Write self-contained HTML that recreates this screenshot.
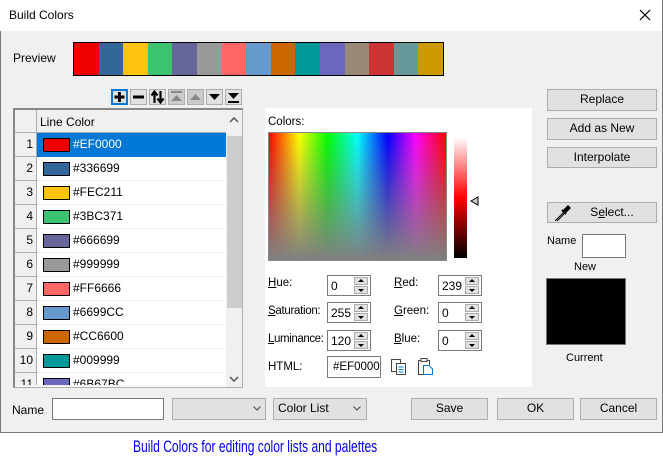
<!DOCTYPE html>
<html><head><meta charset="utf-8"><style>
*{box-sizing:border-box;margin:0;padding:0}
body{width:663px;height:468px;background:#fff;font-family:"Liberation Sans",sans-serif;font-size:12px;color:#000;position:relative;overflow:hidden}
.a{position:absolute}
.dlg{left:0;top:0;width:663px;height:433px;background:#f0f0f0;border:1px solid #7a7a7a;border-top:none}
.title{left:0;top:0;width:662px;height:31px;background:#fff}
.btn{position:absolute;background:#e1e1e1;border:1px solid #adadad;text-align:center;line-height:19px;font-size:12px}
.inp{position:absolute;background:#fff;border:1px solid #7a7a7a}
.tb{position:absolute;top:89px;width:17px;height:16px;background:#e1e1e1;border:1px solid #adadad}
.row{position:absolute;left:14px;width:211px;height:24px;border-bottom:1px solid #f0f0f0}
.num{position:absolute;left:0;top:0;width:22px;height:24px;background:#f0f0f0;border-right:1px solid #adadad;border-bottom:1px solid #adadad;text-align:right;padding-right:3px;line-height:23px}
.sw{position:absolute;left:28px;top:5px;width:27px;height:14px;border:1px solid #000}
.hx{position:absolute;left:58px;top:0;line-height:23px}
.spin{position:absolute;width:44px;height:21px;background:#fff;border:1px solid #7a7a7a}
.spin span{position:absolute;left:3px;top:3px}
.sb{position:absolute;right:1px;top:1px;width:15px;height:17px}
.sb i{position:absolute;left:0;width:14px;height:8px;background:#e1e1e1;border:1px solid #adadad}
.sb i.u:after{content:"";position:absolute;left:3px;top:1px;border:3px solid transparent;border-bottom:3px solid #000;border-top:none;border-left-width:3.5px;border-right-width:3.5px}
.sb i.d:after{content:"";position:absolute;left:3px;top:2px;border:3px solid transparent;border-top:3px solid #000;border-bottom:none;border-left-width:3.5px;border-right-width:3.5px}
.lbl{position:absolute;font-size:11.5px}
</style></head><body>
<div class="a dlg"></div>
<div class="a title"></div>
<div class="a" style="left:9px;top:8px;font-size:12px">Build Colors</div>
<svg class="a" style="left:639px;top:9px" width="12" height="12"><path d="M1 1L11 11M11 1L1 11" stroke="#000" stroke-width="1.2"/></svg>

<div class="a" style="left:13px;top:51px">Preview</div>
<div class="a" style="left:73px;top:42px;width:371px;height:34px;border:1px solid #000;display:flex">
<div style="flex:1;background:#EF0000"></div><div style="flex:1;background:#336699"></div><div style="flex:1;background:#FEC211"></div><div style="flex:1;background:#3BC371"></div><div style="flex:1;background:#666699"></div><div style="flex:1;background:#999999"></div><div style="flex:1;background:#FF6666"></div><div style="flex:1;background:#6699CC"></div><div style="flex:1;background:#CC6600"></div><div style="flex:1;background:#009999"></div><div style="flex:1;background:#6B67BC"></div><div style="flex:1;background:#998877"></div><div style="flex:1;background:#CC3333"></div><div style="flex:1;background:#669999"></div><div style="flex:1;background:#CC9900"></div>
</div>

<div class="tb" style="left:111px;border:2px solid #0078d7"><svg width="13" height="12"><path d="M6.5 1V11M1.5 6H11.5" stroke="#000" stroke-width="3"/></svg></div>
<div class="tb" style="left:130px"><svg width="15" height="14"><path d="M2 7H13" stroke="#000" stroke-width="3"/></svg></div>
<div class="tb" style="left:149px"><svg width="15" height="14"><path d="M4.5 13V3M1.5 5.5L4.5 1.5L7.5 5.5M10.5 1V11M7.5 8.5L10.5 12.5L13.5 8.5" stroke="#000" stroke-width="2.2" fill="none"/></svg></div>
<div class="tb" style="left:168px;background:#ccc"><svg width="15" height="14"><path d="M2 2H13" stroke="#888" stroke-width="2"/><path d="M2 11L7.5 5L13 11Z" fill="#888"/></svg></div>
<div class="tb" style="left:187px;background:#ccc"><svg width="15" height="14"><path d="M2 10L7.5 4L13 10Z" fill="#888"/></svg></div>
<div class="tb" style="left:206px"><svg width="15" height="14"><path d="M2 4L7.5 10L13 4Z" fill="#000"/></svg></div>
<div class="tb" style="left:225px"><svg width="15" height="14"><path d="M2 3L7.5 9L13 3Z" fill="#000"/><path d="M2 12H13" stroke="#000" stroke-width="2"/></svg></div>

<div class="a" style="left:13px;top:108px;width:230px;height:280px;background:#fff;border:1px solid #adadad;border-left:2px solid #888;border-top:2px solid #888;overflow:hidden">
<div class="a" style="left:0;top:0;width:22px;height:23px;background:#f0f0f0;border-right:1px solid #adadad;border-bottom:1px solid #adadad"></div>
<div class="a" style="left:22px;top:0;width:189px;height:23px;background:#f0f0f0;border-bottom:1px solid #adadad;padding:5px 0 0 3px">Line Color</div>
<div class="a" style="left:211px;top:0;width:17px;height:278px;background:#f0f0f0"></div>
<div class="a" style="left:212px;top:26px;width:15px;height:172px;background:#cdcdcd"></div>
<svg class="a" style="left:214px;top:7px" width="10" height="6"><path d="M1 5L5 1L9 5" stroke="#555" stroke-width="1.5" fill="none"/></svg>
<svg class="a" style="left:214px;top:266px" width="10" height="6"><path d="M1 1L5 5L9 1" stroke="#555" stroke-width="1.5" fill="none"/></svg>
</div>
<div class="a" style="left:15px;top:133px">
<div class="row" style="left:0;top:0"><div class="num">1</div><div class="a" style="left:22px;top:0;width:189px;height:24px;background:#0078d7"></div><div class="sw" style="background:#EF0000"></div><div class="hx" style="color:#fff">#EF0000</div></div>
<div class="row" style="left:0;top:24px"><div class="num">2</div><div class="sw" style="background:#336699"></div><div class="hx">#336699</div></div>
<div class="row" style="left:0;top:48px"><div class="num">3</div><div class="sw" style="background:#FEC211"></div><div class="hx">#FEC211</div></div>
<div class="row" style="left:0;top:72px"><div class="num">4</div><div class="sw" style="background:#3BC371"></div><div class="hx">#3BC371</div></div>
<div class="row" style="left:0;top:96px"><div class="num">5</div><div class="sw" style="background:#666699"></div><div class="hx">#666699</div></div>
<div class="row" style="left:0;top:120px"><div class="num">6</div><div class="sw" style="background:#999999"></div><div class="hx">#999999</div></div>
<div class="row" style="left:0;top:144px"><div class="num">7</div><div class="sw" style="background:#FF6666"></div><div class="hx">#FF6666</div></div>
<div class="row" style="left:0;top:168px"><div class="num">8</div><div class="sw" style="background:#6699CC"></div><div class="hx">#6699CC</div></div>
<div class="row" style="left:0;top:192px"><div class="num">9</div><div class="sw" style="background:#CC6600"></div><div class="hx">#CC6600</div></div>
<div class="row" style="left:0;top:216px"><div class="num">10</div><div class="sw" style="background:#009999"></div><div class="hx">#009999</div></div>
<div class="row" style="left:0;top:240px;height:13px;overflow:hidden"><div class="num">11</div><div class="sw" style="background:#6B67BC"></div><div class="hx">#6B67BC</div></div>
</div>

<div class="a" style="left:265px;top:108px;width:267px;height:279px;background:#fff"></div>
<div class="lbl" style="left:268px;top:116px">Colors:</div>
<div class="a" style="left:268px;top:132px;width:179px;height:129px;border:1px solid #888;background:linear-gradient(to bottom,rgba(128,128,128,0),#808080),linear-gradient(to right,#f00,#ff0 17%,#0f0 33%,#0ff 50%,#00f 67%,#f0f 83%,#f00)"></div>
<div class="a" style="left:454px;top:137px;width:13px;height:121px;background:linear-gradient(to bottom,#fff,#f00 50%,#000)"></div>
<svg class="a" style="left:470px;top:196px" width="10" height="10"><path d="M1 5L8 1V9Z" fill="#ccc" stroke="#000"/></svg>

<div class="lbl" style="left:268px;top:277px"><u>H</u>ue:</div>
<div class="lbl" style="left:268px;top:305px;letter-spacing:-0.3px"><u>S</u>aturation:</div>
<div class="lbl" style="left:268px;top:333px;letter-spacing:-0.4px"><u>L</u>uminance:</div>
<div class="lbl" style="left:394px;top:277px"><u>R</u>ed:</div>
<div class="lbl" style="left:394px;top:305px"><u>G</u>reen:</div>
<div class="lbl" style="left:394px;top:333px"><u>B</u>lue:</div>
<div class="lbl" style="left:268px;top:361px">HTML:</div>

<div class="spin" style="left:327px;top:275px"><span>0</span><div class="sb"><i class="u" style="top:0"></i><i class="d" style="top:9px"></i></div></div>
<div class="spin" style="left:327px;top:302px"><span>255</span><div class="sb"><i class="u" style="top:0"></i><i class="d" style="top:9px"></i></div></div>
<div class="spin" style="left:327px;top:330px"><span>120</span><div class="sb"><i class="u" style="top:0"></i><i class="d" style="top:9px"></i></div></div>
<div class="spin" style="left:438px;top:275px"><span>239</span><div class="sb"><i class="u" style="top:0"></i><i class="d" style="top:9px"></i></div></div>
<div class="spin" style="left:438px;top:302px"><span>0</span><div class="sb"><i class="u" style="top:0"></i><i class="d" style="top:9px"></i></div></div>
<div class="spin" style="left:438px;top:330px"><span>0</span><div class="sb"><i class="u" style="top:0"></i><i class="d" style="top:9px"></i></div></div>
<div class="inp" style="left:327px;top:356px;width:54px;height:22px;padding:4px 0 0 5px;font-size:11.5px">#EF0000</div>
<svg class="a" style="left:390px;top:358px" width="18" height="18"><rect x="1.5" y="1.5" width="9" height="12" fill="#fff" stroke="#444"/><rect x="6.5" y="5.5" width="9" height="11" fill="#fff" stroke="#444"/><path d="M8.5 9H13.5M8.5 11.5H13.5M8.5 14H13.5" stroke="#0078d7"/></svg>
<svg class="a" style="left:416px;top:357px" width="18" height="19"><path d="M2.5 3.5H5M11 3.5H13.5V8M7.5 17.5H2.5V3.5" fill="none" stroke="#444"/><rect x="5" y="1.5" width="6" height="3" fill="#fff" stroke="#444"/><path d="M7.5 8.5H13L16.5 12V17.5H7.5Z" fill="#fff" stroke="#0078d7"/></svg>

<div class="btn" style="left:547px;top:89px;width:110px;height:22px">Replace</div>
<div class="btn" style="left:547px;top:118px;width:110px;height:22px">Add as New</div>
<div class="btn" style="left:547px;top:147px;width:110px;height:21px">Interpolate</div>
<div class="btn" style="left:547px;top:202px;width:110px;height:21px"><span style="margin-left:20px">S<u>e</u>lect...</span></div>
<svg class="a" style="left:552px;top:203px" width="20" height="20"><path d="M3 18L12 9M5 18L13 10" stroke="#000" fill="none"/><path d="M11 7L16 2L19 5L14 10Z" fill="#000"/><path d="M10 7L14 11" stroke="#000" stroke-width="2"/></svg>
<div class="lbl" style="left:547px;top:235px;font-size:11px">Name</div>
<div class="inp" style="left:582px;top:234px;width:44px;height:24px"></div>
<div class="lbl" style="left:574px;top:261px;font-size:11px">New</div>
<div class="a" style="left:546px;top:278px;width:80px;height:67px;background:#000;border:1px solid #777"></div>
<div class="lbl" style="left:566px;top:352px;font-size:11px">Current</div>

<div class="lbl" style="left:12px;top:403px;font-size:12px">Name</div>
<div class="inp" style="left:52px;top:398px;width:112px;height:22px"></div>
<div class="btn" style="left:172px;top:398px;width:94px;height:22px;text-align:left"></div>
<svg class="a" style="left:253px;top:406px" width="8" height="5"><path d="M0.5 0.5L4 4L7.5 0.5" stroke="#444" fill="none"/></svg>
<div class="btn" style="left:273px;top:398px;width:94px;height:22px;text-align:left;padding-left:4px">Color List</div>
<svg class="a" style="left:353px;top:406px" width="8" height="5"><path d="M0.5 0.5L4 4L7.5 0.5" stroke="#444" fill="none"/></svg>
<div class="btn" style="left:411px;top:398px;width:77px;height:22px">Save</div>
<div class="btn" style="left:497px;top:398px;width:77px;height:22px">OK</div>
<div class="btn" style="left:580px;top:398px;width:77px;height:22px">Cancel</div>

<div class="a" style="left:133px;top:437px;width:340px;font-size:17px;color:#0000ee;white-space:nowrap;transform:scaleX(0.71);transform-origin:0 0">Build Colors for editing color lists and palettes</div>
</body></html>
